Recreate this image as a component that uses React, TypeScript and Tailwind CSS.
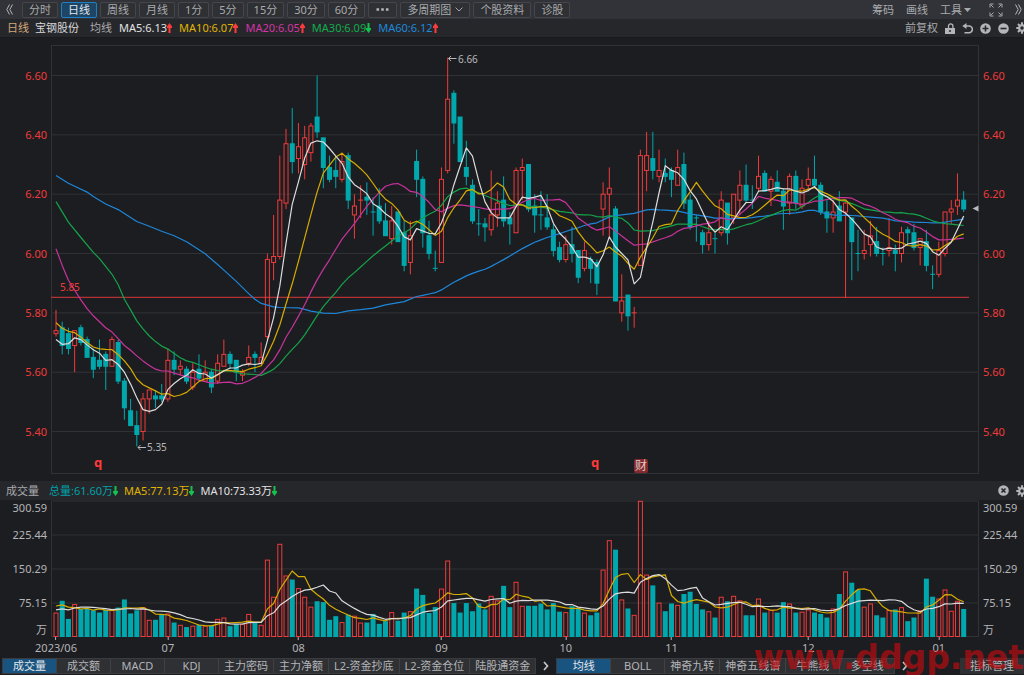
import type { ReactNode } from "react";

// [open, high, low, close, volume] — prices in cents, volume in 万
type Bar = [number, number, number, number, number];

const BARS: Bar[] = [
  [573, 581, 572, 574, 54], [575, 577, 566, 569, 80], [573, 575, 566, 568, 40], [569, 574, 560, 574, 73],
  [575, 576, 569, 570, 62], [571, 572, 565, 565, 62], [565, 568, 558, 561, 59], [564, 571, 561, 562, 54],
  [566, 567, 554, 562, 60], [562, 572, 562, 571, 60], [570, 571, 556, 557, 65], [557, 558, 544, 548, 83],
  [547, 551, 542, 542, 52], [542, 547, 535, 539, 59], [540, 553, 537, 551, 66], [551, 554, 546, 554, 38],
  [552, 554, 548, 551, 38], [552, 556, 550, 551, 49], [551, 568, 550, 564, 52], [564, 567, 559, 561, 32],
  [561, 564, 559, 562, 27], [561, 562, 556, 557, 22], [555, 563, 554, 560, 25], [561, 566, 557, 558, 27],
  [557, 564, 557, 560, 25], [560, 561, 553, 555, 25], [557, 566, 556, 563, 40], [562, 571, 562, 566, 43],
  [566, 567, 561, 563, 24], [564, 564, 557, 560, 28], [559, 561, 557, 560, 29], [563, 569, 562, 565, 51],
  [566, 567, 560, 565, 32], [563, 570, 563, 565, 27], [572, 600, 571, 598, 171], [597, 613, 591, 599, 89],
  [599, 633, 598, 618, 206], [617, 642, 615, 637, 136], [637, 649, 627, 631, 127], [632, 644, 627, 636, 108],
  [630, 643, 625, 639, 89], [634, 644, 631, 643, 67], [646, 660, 639, 641, 79], [639, 639, 622, 629, 77],
  [629, 633, 624, 625, 38], [628, 633, 622, 626, 46], [625, 634, 624, 631, 33], [633, 634, 615, 618, 49],
  [613, 620, 605, 616, 47], [618, 623, 612, 618, 32], [619, 624, 613, 618, 32], [614, 619, 606, 614, 51],
  [616, 622, 610, 611, 29], [611, 617, 606, 606, 35], [605, 616, 603, 611, 55], [614, 614, 604, 604, 36],
  [607, 611, 594, 596, 54], [597, 611, 593, 606, 57], [631, 635, 619, 625, 107], [625, 626, 602, 607, 93],
  [606, 611, 598, 600, 53], [595, 601, 594, 595, 66], [597, 629, 597, 625, 107], [628, 666, 627, 652, 169],
  [654, 655, 637, 644, 75], [646, 646, 631, 631, 54], [629, 638, 623, 626, 75], [623, 625, 610, 611, 57],
  [610, 615, 606, 610, 74], [610, 612, 604, 609, 61], [608, 628, 606, 613, 91], [613, 621, 609, 617, 81],
  [618, 626, 609, 611, 113], [612, 614, 603, 610, 66], [607, 629, 607, 628, 122], [628, 632, 618, 629, 69],
  [630, 630, 614, 615, 69], [616, 620, 607, 613, 69], [613, 621, 608, 613, 74], [612, 620, 608, 609, 61],
  [608, 610, 599, 601, 75], [602, 604, 597, 598, 56], [598, 606, 597, 603, 55], [603, 609, 597, 600, 68],
  [601, 601, 590, 592, 64], [595, 604, 594, 601, 54], [598, 599, 590, 595, 48], [597, 598, 586, 590, 54],
  [615, 624, 606, 620, 149], [620, 629, 605, 622, 214], [615, 616, 584, 584, 193], [580, 593, 577, 584, 83],
  [586, 586, 574, 579, 63], [580, 582, 575, 580, 49], [596, 635, 596, 633, 301], [628, 641, 621, 633, 138],
  [632, 641, 625, 628, 114], [626, 635, 624, 628, 76], [627, 632, 624, 626, 57], [628, 629, 619, 625, 74],
  [623, 635, 623, 629, 71], [630, 634, 615, 617, 95], [618, 620, 608, 609, 100], [612, 613, 604, 612, 73],
  [607, 608, 600, 603, 61], [603, 611, 601, 607, 57], [605, 607, 600, 605, 43], [607, 621, 606, 618, 89],
  [617, 617, 603, 607, 79], [612, 620, 610, 620, 91], [618, 628, 613, 623, 81], [623, 630, 617, 618, 48],
  [618, 623, 615, 618, 48], [622, 633, 621, 626, 85], [627, 628, 621, 621, 54], [621, 626, 616, 625, 60],
  [624, 628, 621, 621, 54], [621, 622, 608, 616, 77], [617, 627, 613, 626, 74], [626, 628, 615, 617, 54],
  [616, 625, 615, 622, 56], [623, 629, 621, 625, 61], [625, 633, 623, 623, 54], [623, 624, 613, 614, 51],
  [614, 618, 607, 612, 43], [612, 618, 607, 614, 63], [616, 621, 611, 611, 95], [614, 618, 585, 617, 145],
  [612, 612, 591, 604, 120], [600, 608, 594, 600, 104], [600, 608, 598, 601, 67], [603, 611, 599, 606, 74],
  [604, 609, 599, 600, 48], [600, 602, 596, 600, 43], [601, 612, 599, 602, 60], [601, 603, 594, 600, 61],
  [600, 609, 597, 607, 66], [608, 609, 603, 607, 35], [607, 610, 601, 602, 43], [602, 605, 596, 605, 59],
  [604, 608, 594, 596, 129], [593, 596, 588, 593, 89], [593, 604, 592, 601, 85], [600, 614, 599, 614, 105],
  [614, 618, 610, 615, 58], [616, 627, 613, 618, 80], [618, 621, 614, 615, 62],
];

// dojis whose colour follows the previous close instead of the open
const RED_DOJI = [49, 93];

type Point = [number, number];

// averages before the first full window
const MA_LEADS: Record<number, Point[]> = {
  5: [[0, 571], [1, 569.4], [2, 569.6], [3, 571.6]],
  10: [[0, 576.7], [1, 574.8], [2, 573.8], [3, 573.3], [4, 571.8], [5, 570], [6, 568.5], [7, 567.9], [8, 567.7]],
  20: [[0, 601.6], [1, 596], [2, 591], [3, 587.6], [4, 584.4], [5, 581.4], [6, 579], [7, 577], [8, 575], [9, 573.5],
    [10, 571.3], [11, 569], [12, 567.4], [13, 565.5], [14, 563.8], [15, 562.3], [16, 561], [17, 560.4], [18, 560.4]],
  30: [[0, 617.5], [2, 610.6], [4, 605.4], [6, 600.4], [7, 598.3], [9, 593], [10, 589.5], [11, 584.6], [12, 581],
    [13, 577.3], [14, 574.6], [15, 572.2], [16, 570.3], [17, 568.8], [18, 567.8], [19, 566.3], [20, 564.9], [21, 563.8],
    [22, 563.3], [23, 562.5], [24, 561.7], [25, 561], [26, 560.5], [28, 560.4], [29, 560]],
  60: [[0, 626.3], [2, 623.7], [3, 622.7], [5, 620.7], [6, 619.2], [8, 616.7], [10, 614.8], [13, 610.8], [15, 609.2],
    [17, 607.5], [19, 606], [21, 604], [23, 601.3], [24, 599.9], [26, 596.3], [27, 594.4], [29, 590.6], [31, 586.5],
    [32, 584.6], [33, 583.2], [34, 582.6], [35, 582], [36, 581.8], [39, 581.7], [40, 581.2], [41, 580.6], [43, 579.9],
    [45, 579.8], [47, 580.7], [49, 581.1], [51, 581.6], [53, 582.7], [56, 583.8], [58, 585.5]],
};

const VOL_LEADS: Record<number, Point[]> = {
  5: [[0, 68.5], [1, 71], [2, 66], [3, 65]],
  10: [[0, 60], [1, 62], [2, 60], [3, 64], [4, 66], [5, 66], [6, 65.5], [7, 64], [8, 62.6]],
};

const W = 928;
const PRICE_H = 429;
const VOL_H = 137;

const barX = (i: number) => 5 + i * 6.217;
const priceY = (cents: number) => 30.5 + (660 - cents) * 2.967;
const volY = (v: number) => 137 - v * 0.4525;

const RED = "#ee3b3b";
const TEAL = "#00a8ae";

function average(col: 3 | 4, n: number, lead: Point[]): Point[] {
  const out = [...lead];
  for (let i = n - 1; i < BARS.length; i++) {
    if (i <= lead[lead.length - 1][0]) continue;
    const win = BARS.slice(i - n + 1, i + 1);
    out.push([i, win.reduce((sum, b) => sum + b[col], 0) / n]);
  }
  return out;
}

function toPoints(data: Point[], y: (v: number) => number) {
  return data.map(([i, v]) => `${barX(i).toFixed(1)},${y(v).toFixed(1)}`).join(" ");
}

function isUp(i: number) {
  const [open, , , close] = BARS[i];
  return close > open || RED_DOJI.includes(i) || i === 0;
}

function Candle({ i }: { i: number }) {
  const [open, high, low, close] = BARS[i];
  const x = barX(i);
  const top = priceY(Math.max(open, close));
  const bottom = priceY(Math.min(open, close));
  if (open === close) {
    const color = isUp(i) ? RED : TEAL;
    return (
      <g stroke={color}>
        <line x1={x} x2={x} y1={priceY(high)} y2={priceY(low)} />
        <line x1={x - 2.5} x2={x + 2.5} y1={top} y2={top} />
      </g>
    );
  }
  if (!isUp(i)) {
    return (
      <g>
        <line x1={x} x2={x} y1={priceY(high)} y2={priceY(low)} stroke={TEAL} />
        <rect x={x - 2.5} y={top - 0.5} width={5} height={bottom - top + 1} fill={TEAL} />
      </g>
    );
  }
  return (
    <g stroke={RED} fill="none">
      <line x1={x} x2={x} y1={priceY(high)} y2={top} />
      <line x1={x} x2={x} y1={bottom} y2={priceY(low)} />
      <rect x={x - 2} y={top} width={4} height={bottom - top} />
    </g>
  );
}

function PricePlot() {
  return (
    <svg viewBox={`0 0 ${W} ${PRICE_H}`} preserveAspectRatio="none" className="absolute inset-0 h-full w-full" aria-hidden="true">
      <g stroke="#303236">
        <path d="M0 .5H927.5V428.5H.5V0" fill="none" />
        {[660, 640, 620, 600, 580, 560, 540].map((p) => (
          <line key={p} x1={0} x2={W} y1={priceY(p)} y2={priceY(p)} />
        ))}
      </g>
      <line x1={0} x2={918} y1={252.3} y2={252.3} stroke="#d9383a" />
      {BARS.map((_, i) => <Candle key={i} i={i} />)}
      <g fill="none" strokeWidth={1.2} strokeLinejoin="round">
        <polyline points={toPoints(average(3, 60, MA_LEADS[60]), priceY)} stroke="#1e86d8" />
        <polyline points={toPoints(average(3, 30, MA_LEADS[30]), priceY)} stroke="#15a34a" />
        <polyline points={toPoints(average(3, 20, MA_LEADS[20]), priceY)} stroke="#c8339c" />
        <polyline points={toPoints(average(3, 10, MA_LEADS[10]), priceY)} stroke="#d6ac00" />
        <polyline points={toPoints(average(3, 5, MA_LEADS[5]), priceY)} stroke="#dcdcdc" />
      </g>
      <path d="M921.500 163.5l6 -3v6z" fill="#b8b8ba" />
      <path d="M397.500 13.500h8M400 11l-2.500 2.500 2.500 2.500M87 402.500h8M89.500 400l-2.500 2.500 2.500 2.500" stroke="#b8b8ba" fill="none" />
    </svg>
  );
}

function VolumePlot() {
  return (
    <svg viewBox={`0 0 ${W} ${VOL_H}`} preserveAspectRatio="none" className="absolute inset-0 h-full w-full" aria-hidden="true">
      <g stroke="#303236">
        <path d="M.5 137V1H927.500V136.500H0" fill="none" />
        {[225.44, 150.29, 75.15].map((v) => (
          <line key={v} x1={0} x2={W} y1={volY(v)} y2={volY(v)} />
        ))}
      </g>
      {BARS.map((b, i) => {
        const x = barX(i);
        return isUp(i) ? (
          <rect key={i} x={x - 2} y={volY(b[4]) + 0.5} width={4} height={b[4] * 0.4525 - 1} fill="none" stroke={RED} />
        ) : (
          <rect key={i} x={x - 2.5} y={volY(b[4])} width={5} height={b[4] * 0.4525} fill={TEAL} />
        );
      })}
      <g fill="none" strokeWidth={1.2} strokeLinejoin="round">
        <polyline points={toPoints(average(4, 5, VOL_LEADS[5]), volY)} stroke="#d6ac00" />
        <polyline points={toPoints(average(4, 10, VOL_LEADS[10]), volY)} stroke="#dcdcdc" />
      </g>
    </svg>
  );
}

// text pinned to a spot of a plot, coordinates in plot units
function Pin({ x, y, h, className, children }: { x: number; y: number; h: number; className: string; children: ReactNode }) {
  return (
    <span
      className={`absolute -translate-y-1/2 leading-none whitespace-nowrap ${className}`}
      style={{ left: `${(x / W) * 100}%`, top: `${(y / h) * 100}%` }}
    >
      {children}
    </span>
  );
}

function Scale({ side, rows, color }: { side: "left" | "right"; rows: [string, number][]; color: string }) {
  return (
    <div className={`relative shrink-0 ${side === "left" ? "w-[51px]" : "w-[45px]"} ${color}`}>
      {rows.map(([label, top]) => (
        <span
          key={label}
          className={`absolute -translate-y-1/2 pb-0.5 leading-none ${side === "left" ? "right-1" : "left-1"}`}
          style={{ top: `${top * 100}%` }}
        >
          {label}
        </span>
      ))}
    </div>
  );
}

const PRICE_ROWS: [string, number][] = [660, 640, 620, 600, 580, 560, 540].map((p) => [
  (p / 100).toFixed(2),
  priceY(p) / PRICE_H,
]);

const VOL_ROWS: [string, number][] = [
  ["300.59", 0.06],
  ["225.44", 0.255],
  ["150.29", 0.5],
  ["75.15", 0.75],
  ["万", 0.95],
];

const MONTHS: [string, number][] = [["2023/06", 0], ["07", 18], ["08", 39], ["09", 62], ["10", 82], ["11", 99], ["12", 121], ["01", 142]];

function Arrow({ dir }: { dir: "up" | "down" }) {
  return (
    <svg viewBox="0 0 5 10" className={`h-2.5 w-[5px] shrink-0 ${dir === "up" ? "text-[#ff3a3a]" : "rotate-180 text-[#12c14e]"}`} aria-hidden="true">
      <path d="M2.500 0L5 3.500V5H3.500V10H1.500V5H0V3.500z" fill="currentColor" />
    </svg>
  );
}

function Reading({ text, dir, color }: { text: string; dir: "up" | "down"; color: string }) {
  return (
    <span className={`flex items-center whitespace-nowrap ${color}`}>
      {text}
      <Arrow dir={dir} />
    </span>
  );
}

function Gear() {
  return (
    <svg viewBox="0 0 12 12" className="size-3" aria-hidden="true">
      <g stroke="#b4b5b8" strokeWidth="2">
        <path d="M6 .3v11.400M.3 6h11.400M2 2l8 8M10 2l-8 8" />
      </g>
      <circle cx="6" cy="6" r="3.800" fill="#b4b5b8" />
      <circle cx="6" cy="6" r="1.700" fill="#26272b" />
    </svg>
  );
}

function RoundIcon({ d }: { d: string }) {
  return (
    <svg viewBox="0 0 11 11" className="size-[11px]" aria-hidden="true">
      <circle cx="5.500" cy="5.500" r="5.300" fill="#b4b5b8" />
      <path d={d} stroke="#26272b" strokeWidth="1.600" />
    </svg>
  );
}

function Chevrons({ flip = false }: { flip?: boolean }) {
  return (
    <svg viewBox="0 0 7 11" className={`h-[11px] w-[7px] ${flip ? "rotate-180" : ""}`} aria-hidden="true">
      <path d="M3.500.5L.8 5.500l2.700 5M6.500.5L3.800 5.500l2.700 5" stroke="#b4b5b8" fill="none" />
    </svg>
  );
}

const PERIODS = ["分时", "日线", "周线", "月线", "1分", "5分", "15分", "30分", "60分"];

function Toolbar() {
  const base = "flex h-4 shrink-0 items-center rounded-xs border whitespace-nowrap";
  const idle = "border-[#44464b] bg-[#2e3034] text-[#a9aaad]";
  return (
    <header className="flex h-[19px] shrink-0 items-center bg-[#313338] text-[#a9aaad]">
      <button aria-label="收起" className="flex w-[22px] shrink-0 pl-1.5"><Chevrons /></button>
      <nav className="flex gap-[3px]">
        {PERIODS.map((p) => (
          <button key={p} className={`${base} px-1.5 ${p === "日线" ? "border-[#1f7fc4] bg-[#1d4566] text-[#e4e6e8]" : idle}`}>
            {p}
          </button>
        ))}
        <button aria-label="更多" className={`${base} ${idle} px-[7px]`}>
          <svg viewBox="0 0 13 3" className="h-[3px] w-[13px]" aria-hidden="true">
            <path d="M.5 .3h2.600v2.400H.5zM5.200 .3h2.600v2.400H5.200zM9.900 .3h2.600v2.400H9.900z" fill="#b4b5b8" />
          </svg>
        </button>
        <button className={`${base} ${idle} gap-1 px-1.5`}>
          多周期图
          <svg viewBox="0 0 8 5" className="h-[5px] w-2" aria-hidden="true">
            <path d="M.6.6L4 4 7.400.6" stroke="#a9aaad" fill="none" />
          </svg>
        </button>
        <button className={`${base} ${idle} px-1.5`}>个股资料</button>
        <button className={`${base} ${idle} px-1.5`}>诊股</button>
      </nav>
      <div className="ml-auto flex shrink-0 items-center gap-3">
        <button>筹码</button>
        <button>画线</button>
        <button className="flex items-center gap-0.5">
          工具
          <svg viewBox="0 0 7 4" className="h-1 w-[7px]" aria-hidden="true">
            <path d="M0 0h7L3.500 4z" fill="#a9aaad" />
          </svg>
        </button>
        <button aria-label="全屏" className="ml-1.5">
          <svg viewBox="0 0 14 14" className="size-3.5" aria-hidden="true">
            <path d="M1 4.500V1h3.500M2 2l2.500 2.500M9.500 1H13v3.500M12 2L9.500 4.500M1 9.500V13h3.500M2 12l2.500-2.500M13 9.500V13H9.500M12 12L9.500 9.500" stroke="#a9aaad" fill="none" />
          </svg>
        </button>
        <button aria-label="展开" className="pr-0.5"><Chevrons flip /></button>
      </div>
    </header>
  );
}

function PriceHeader() {
  return (
    <div className="flex h-[19px] shrink-0 items-center overflow-hidden border-b border-[#1b191e] bg-[#26272b] pl-[7px]">
      <span className="text-[#d3a878]">日线</span>
      <h1 className="ml-1.5 text-[#d6d7d9]">宝钢股份</h1>
      <span className="ml-[11px] text-[#a9aaad]">均线</span>
      <div className="ml-[7px] flex gap-[7px]">
        <Reading text="MA5:6.13" dir="up" color="text-[#e2e2e2]" />
        <Reading text="MA10:6.07" dir="up" color="text-[#e0b400]" />
        <Reading text="MA20:6.05" dir="up" color="text-[#d335a4]" />
        <Reading text="MA30:6.09" dir="down" color="text-[#12ad4b]" />
        <Reading text="MA60:6.12" dir="up" color="text-[#1e88dd]" />
      </div>
      <div className="ml-auto -mr-1 flex shrink-0 items-center gap-[7px] text-[#a9aaad]">
        <button>前复权</button>
        <button aria-label="锁定">
          <svg viewBox="0 0 10 11" className="h-[11px] w-2.5" aria-hidden="true">
            <path d="M3.500 5V3a2.200 2.200 0 0 1 4.400 0v2" stroke="#b4b5b8" strokeWidth="1.300" fill="none" />
            <path d="M0 5h10v6H0z" fill="#b4b5b8" />
            <circle cx="5" cy="8" r="1" fill="#26272b" />
          </svg>
        </button>
        <button aria-label="撤销">
          <svg viewBox="0 0 11 11" className="size-[11px]" aria-hidden="true">
            <path d="M2 3h5a3.300 3.300 0 0 1 0 6.700H2.500" stroke="#b4b5b8" strokeWidth="1.600" fill="none" />
            <path d="M4.500 0v6L.3 3z" fill="#b4b5b8" />
          </svg>
        </button>
        <button aria-label="放大"><RoundIcon d="M5.500 2.500v6M2.500 5.500h6" /></button>
        <button aria-label="缩小"><RoundIcon d="M2.500 5.500h6" /></button>
        <button aria-label="设置"><Gear /></button>
      </div>
    </div>
  );
}

function TabStrip({ tabs, active }: { tabs: string[]; active?: string }) {
  return (
    <div className="flex border border-[#3a3c40]">
      {tabs.map((t) => (
        <button
          key={t}
          className={`min-w-[54px] border-r border-[#3f4145] px-[5px] text-center leading-[14px] whitespace-nowrap last:border-r-0 ${
            t === active ? "bg-[#195480] text-[#e4e6e8]" : "bg-[#2e3034] text-[#b4b5b8]"
          }`}
        >
          {t}
        </button>
      ))}
    </div>
  );
}

function More() {
  return (
    <button aria-label="更多指标" className="flex h-4 w-5 shrink-0 items-center justify-center">
      <svg viewBox="0 0 6 10" className="h-2.5 w-1.5" aria-hidden="true">
        <path d="M1 1l3.500 4L1 9" stroke="#c4c5c8" strokeWidth="1.700" fill="none" />
      </svg>
    </button>
  );
}

export default function App() {
  return (
    <main className="relative flex h-screen flex-col overflow-hidden bg-[#1c1d20] font-['Noto_Sans','Noto_Sans_CJK_SC',sans-serif] text-[11px] leading-4">
      <Toolbar />
      <PriceHeader />

      {/* Price */}
      <section className="mt-[7px] flex min-h-0 flex-1">
        <Scale side="left" rows={PRICE_ROWS} color="text-[#ee3b3b]" />
        <div className="relative flex-1">
          <PricePlot />
          <Pin x={407} y={14} h={PRICE_H} className="text-[10px] text-[#b8b8ba]">6.66</Pin>
          <Pin x={96} y={402} h={PRICE_H} className="text-[10px] text-[#b8b8ba]">5.35</Pin>
          <Pin x={9} y={242} h={PRICE_H} className="text-[10px] text-[#ee3b3b]">5.85</Pin>
          <Pin x={43} y={417} h={PRICE_H} className="text-[13px] font-bold text-[#ff3a3a]">q</Pin>
          <Pin x={540} y={417} h={PRICE_H} className="text-[13px] font-bold text-[#ff3a3a]">q</Pin>
          <Pin x={583} y={421} h={PRICE_H} className="rounded-xs bg-[#842a2c] p-px text-xs text-[#dcc8c8]">财</Pin>
        </div>
        <Scale side="right" rows={PRICE_ROWS} color="text-[#ee3b3b]" />
      </section>

      {/* Volume */}
      <div className="mt-[7px] flex h-[19px] shrink-0 items-center overflow-hidden bg-[#26272b] pl-1.5">
        <h2 className="text-[#a9aaad]">成交量</h2>
        <div className="ml-2.5 flex gap-1.5">
          <Reading text="总量:61.60万" dir="down" color="text-[#00a0a8]" />
          <Reading text="MA5:77.13万" dir="down" color="text-[#e0b400]" />
          <Reading text="MA10:73.33万" dir="down" color="text-[#e2e2e2]" />
        </div>
        <div className="ml-auto -mr-1 flex items-center gap-[7px]">
          <button aria-label="关闭"><RoundIcon d="M3.500 3.500l4 4M7.500 3.500l-4 4" /></button>
          <button aria-label="指标设置"><Gear /></button>
        </div>
      </div>
      <section className="flex h-[137px] shrink-0">
        <Scale side="left" rows={VOL_ROWS} color="text-[#b4b5b8]" />
        <div className="relative flex-1">
          <VolumePlot />
        </div>
        <Scale side="right" rows={VOL_ROWS} color="text-[#b4b5b8]" />
      </section>

      {/* Months */}
      <div className="mr-[45px] ml-[51px] h-[21px] shrink-0">
        <div className="relative h-full text-[#b4b5b8]">
          {MONTHS.map(([label, i]) => (
            <span
              key={label}
              className="absolute top-0 flex -translate-x-1/2 flex-col items-center leading-4"
              style={{ left: `${(barX(i) / W) * 100}%` }}
            >
              <i className="h-[3px] w-px bg-[#b4b5b8]" />
              {label}
            </span>
          ))}
        </div>
      </div>

      <footer className="flex h-[17px] shrink-0 items-start pl-0.5">
        <TabStrip
          tabs={["成交量", "成交额", "MACD", "KDJ", "主力密码", "主力净额", "L2-资金抄底", "L2-资金仓位", "陆股通资金"]}
          active="成交量"
        />
        <More />
        <TabStrip tabs={["均线", "BOLL", "神奇九转", "神奇五线谱", "牛熊线", "多空线"]} active="均线" />
        <More />
        <button className="ml-auto w-16 bg-[#2e3034] leading-4 whitespace-nowrap text-[#b4b5b8]">指标管理</button>
      </footer>

      <div className="pointer-events-none absolute right-0 bottom-0 font-['DejaVu_Sans',sans-serif] text-[33px] leading-[34px] font-bold text-[#c80a0e]/65">
        www.ddgp.net
      </div>
    </main>
  );
}
